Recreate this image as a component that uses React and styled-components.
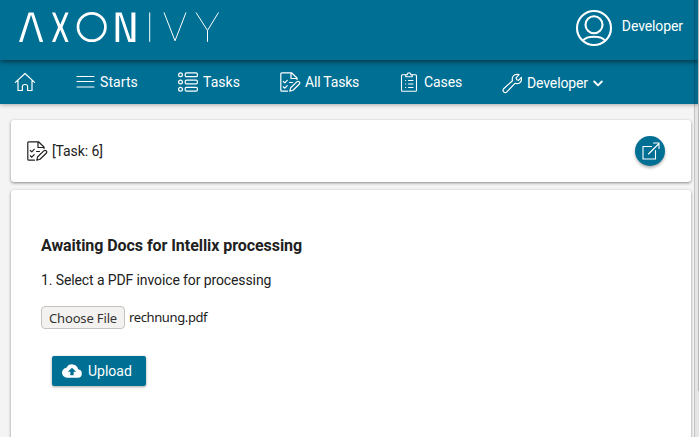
import React from "react";
import styled, { createGlobalStyle } from "styled-components";

const blue = "#006f94";

const Global = createGlobalStyle`
  * { box-sizing: border-box; }
  body { margin: 0; overflow: hidden; background: #f4f4f4; color: #212121; font: 14px/20px Roboto, sans-serif; }
  svg { display: block; flex: none; }
`;

const Page = styled.div`
  position: relative;
  height: 437px;
  width: 699px;
  overflow: hidden;
  display: flex;
  flex-direction: column;
`;
/* Translucent overlay scrollbar, drawn above the page content. */
const ScrollTrack = styled.div`
  position: absolute;
  top: 0;
  right: 0;
  bottom: 0;
  width: 5px;
  z-index: 2;
  background: rgba(0, 0, 0, 0.06);
  border-left: 1px solid rgba(0, 0, 0, 0.15);
  display: flex;
  justify-content: flex-end;
`;
const ScrollThumb = styled.div`
  width: 1px;
  height: 391px;
  background: #b8b8b8;
`;
const Header = styled.header`
  height: 60px;
  flex: none;
  background: ${blue};
  color: #fff;
  display: flex;
  justify-content: space-between;
  position: relative;
  box-shadow: 0 1px 6px rgba(0, 0, 0, 0.65);
`;
const Logo = styled.svg`
  margin: 10px 0 0 16px;
`;
const User = styled.div`
  display: flex;
  align-items: flex-start;
  gap: 9px;
  padding: 9px 16px 0 0;
`;
const UserName = styled.span`
  margin-top: 7px;
  letter-spacing: -0.1px;
`;
const Nav = styled.nav`
  height: 44px;
  flex: none;
  background: ${blue};
  color: #fff;
  display: flex;
  padding-left: 14px;
  box-shadow: 0 1px 4px rgba(0, 0, 0, 0.3);
`;
const NavItem = styled.a`
  display: flex;
  align-items: center;
  height: 20px;
  margin-top: ${(p) => p.$top || 12}px;
  gap: ${(p) => p.$gap || 4}px;
  width: ${(p) => p.$width}px;
  letter-spacing: ${(p) => p.$tracking || 0}px;
  white-space: nowrap;
`;
const Card = styled.section`
  background: #fff;
  border-radius: 3px;
  margin: 0 8px 0 11px;
  box-shadow: 0 1px 3px rgba(0, 0, 0, 0.45);
`;
const TaskCard = styled(Card)`
  height: 62px;
  flex: none;
  margin-top: 16px;
  padding: 0 26px 0 16px;
  display: flex;
  align-items: center;
  justify-content: space-between;
`;
const TaskTitle = styled.div`
  display: flex;
  align-items: center;
  gap: 4px;
  letter-spacing: -0.1px;
`;
const RoundButton = styled.button`
  width: 30px;
  height: 30px;
  padding: 0 0 1px 1px;
  border: 0;
  border-radius: 50%;
  background: ${blue};
  color: #fff;
  display: flex;
  align-items: center;
  justify-content: center;
  box-shadow: 0 2px 3px rgba(0, 0, 0, 0.3);
`;
const FormCard = styled(Card)`
  margin-top: 8px;
  height: 280px;
  flex: none;
  padding: 46px 30px 0;
`;
const Title = styled.h1`
  margin: 0;
  font-size: 16px;
  line-height: 20px;
  font-weight: 700;
  letter-spacing: -0.06px;
`;
const Instruction = styled.p`
  margin: 14px 0 16px;
  letter-spacing: -0.11px;
`;
const FileRow = styled.div`
  display: flex;
  align-items: center;
  gap: 4px;
  height: 23px;
  font: 13px/20px "Noto Sans", sans-serif;
`;
const ChooseButton = styled.button`
  width: 84px;
  height: 23px;
  padding: 0;
  border: 1px solid #c5c2bf;
  border-radius: 4px;
  background: #f3f2f1;
  color: #333;
  font: inherit;
  letter-spacing: -0.15px;
  white-space: nowrap;
`;
const FileName = styled.span`
  margin-top: -2px;
  letter-spacing: -0.38px;
`;
const UploadButton = styled.button`
  margin: 27px 0 0 11px;
  width: 94px;
  height: 30px;
  padding: 0 0 0 10px;
  border: 0;
  border-radius: 2px;
  background: ${blue};
  color: #fff;
  font: inherit;
  display: flex;
  align-items: center;
  gap: 6px;
  box-shadow: 0 1px 3px rgba(0, 0, 0, 0.35);
`;

const Icon = ({ w = 20, h = 20, sw = 1.1, children }) => (
  <svg width={w} height={h} viewBox={`0 0 ${w} ${h}`} fill="none" stroke="currentColor" strokeWidth={sw} strokeLinejoin="round" strokeLinecap="round">
    {children}
  </svg>
);

const AxonLogo = () => (
  <Logo width="210" height="36" viewBox="16 10 210 36" fill="#fff" stroke="#fff" aria-label="AXON IVY">
    <g stroke="none">
      <path d="M19 42 L28.6 12.5 H33.6 L43.2 42 H39.7 L31.3 15.2 H30.9 L22.4 42 Z" />
      <path d="M115.6 42 V12.5 H121.6 L130.6 39 H131.4 V12.5 H135.4 V42 H128.4 L119.7 15.8 H119.2 V42 Z" />
      <path d="M52 12.5 H55.2 L60.3 24.5 L65.4 12.5 H68.6 L62.5 27.2 L68.6 42 H65.4 L60.3 29.8 L55.2 42 H52 L58.1 27.2 Z" />
    </g>
    <g fill="none">
      <circle cx="91.7" cy="27" r="13.7" strokeWidth="2.7" />
      <path d="M149.7 12.5 V41.8 M164 12.5 L175 40.8 L186 12.5 M196 12.5 L207.5 30.5 V41.8 M218.5 12.5 L207.5 30.5" strokeWidth="1" />
    </g>
  </Logo>
);

const TaskIcon = () => (
  <Icon w={21} h={20} sw={1.2}>
    <path d="M17 7.5 V6 L11.5 .8 H1.8 Q.8 .8 .8 1.8 V18.2 Q.8 19.2 1.8 19.2 H7.5 M11 .8 V6.5 H17" />
    <path d="M3.3 9.5 L4.8 10.9 L7.2 8.3 M3.3 14.8 L4.8 16.2 L7.2 13.6 M9.5 10.5 H12.5" />
    <path d="M9.8 19.2 L10.7 15.8 L16.8 9.9 Q18 8.8 19.3 9.9 Q20.3 11.1 19.2 12.3 L13 18.2 Z" />
  </Icon>
);

export default function App() {
  return (
    <>
      <Global />
      <Page>
        <Header>
          <AxonLogo />
          <User>
            <Icon w={38} h={38} sw={2.1}>
              <circle cx="19" cy="19" r="17" />
              <circle cx="19" cy="15.8" r="8.5" />
              <path d="M8 31.5 Q10.8 27.7 19 27.7 Q27.2 27.7 30 31.5" />
            </Icon>
            <UserName>Developer</UserName>
          </User>
        </Header>
        <Nav>
          <NavItem $width={62} aria-label="Home">
            <Icon w={22} h={20} sw={1.2}>
              <path d="M1.4 10.4 L11 1.5 L20.6 10.4 M4 8.5 V18.5 H8.4 V14.5 Q8.4 12.5 11 12.5 Q13.6 12.5 13.6 14.5 V18.5 H18 V8.5" />
            </Icon>
          </NavItem>
          <NavItem $width={102} $gap={5} $tracking={0.08}>
            <Icon w={19} h={20}><path d="M1 4.5 H18 M1 9.5 H18 M1 15 H18" /></Icon>
            Starts
          </NavItem>
          <NavItem $width={102} $gap={5} $tracking={0.05}>
            <Icon w={20} h={20} sw={1.2}>
              {[2.8, 10, 17.2].map((y) => (
                <g key={y}>
                  <circle cx="2.5" cy={y} r="1.9" />
                  <rect x="7.2" y={y - 1.9} width="12.2" height="3.8" rx="1.3" />
                </g>
              ))}
            </Icon>
            Tasks
          </NavItem>
          <NavItem $width={120} $tracking={-0.2}>
            <TaskIcon />
            All Tasks
          </NavItem>
          <NavItem $width={102} $gap={5} $tracking={-0.1}>
            <Icon w={19} h={20}>
              <path d="M6 2.8 H2.5 Q1.5 2.8 1.5 3.8 V18.2 Q1.5 19.2 2.5 19.2 H15.5 Q16.5 19.2 16.5 18.2 V3.8 Q16.5 2.8 15.5 2.8 H12" />
              <path d="M5.8 4.8 V2.8 H7.1 Q7.5 .8 9 .8 Q10.5 .8 10.9 2.8 H12.2 V4.8 Z M5.5 8.5 h.2 M8.5 8.5 H13 M5.5 12 h.2 M8.5 12 H13 M5.5 15.5 h.2 M8.5 15.5 H13" />
            </Icon>
            Cases
          </NavItem>
          <NavItem $width={110} $top={13} $gap={5} $tracking={-0.12}>
            <Icon w={20} h={21} sw={1.2}>
              <path d="M17.1 1.7 L14 4.8 L14.7 6.7 L16.5 7.3 L19.4 4.3 Q20.2 8 17.5 10 Q15.5 11.2 13 10.3 L4.8 18.9 Q3.3 20.4 1.7 18.9 Q.3 17.3 1.6 15.8 L10.5 7.7 Q9.7 5 11.3 3 Q13.2 .6 17.1 1.7 Z" />
            </Icon>
            Developer
            <Icon w={10} h={12} sw={1.9}><path d="M1.2 4.5 L5 8.3 L8.8 4.5" /></Icon>
          </NavItem>
        </Nav>
        <TaskCard>
          <TaskTitle>
            <TaskIcon />
            [Task: 6]
          </TaskTitle>
          <RoundButton aria-label="Open in new window">
            <Icon w={18} h={18}><path d="M9.5 4.5 H1 V17 H13.5 V8.5 M6.5 12 L17 1.5 M11.5 1 H17 V6.5" strokeLinejoin="miter" /></Icon>
          </RoundButton>
        </TaskCard>
        <FormCard>
          <Title>Awaiting Docs for Intellix processing</Title>
          <Instruction>1. Select a PDF invoice for processing</Instruction>
          <FileRow>
            <ChooseButton>Choose File</ChooseButton>
            <FileName>rechnung.pdf</FileName>
          </FileRow>
          <UploadButton>
            <svg width="20" height="20" viewBox="0 0 24 24" fill="currentColor">
              <path d="M19.35 10.04A7.49 7.49 0 0 0 5.35 8.04 6 6 0 0 0 6 20h13a5 5 0 0 0 .35-9.96zM14 13v4h-4v-4H7l5-5 5 5h-3z" />
            </svg>
            Upload
          </UploadButton>
        </FormCard>
        <ScrollTrack><ScrollThumb /></ScrollTrack>
      </Page>
    </>
  );
}
